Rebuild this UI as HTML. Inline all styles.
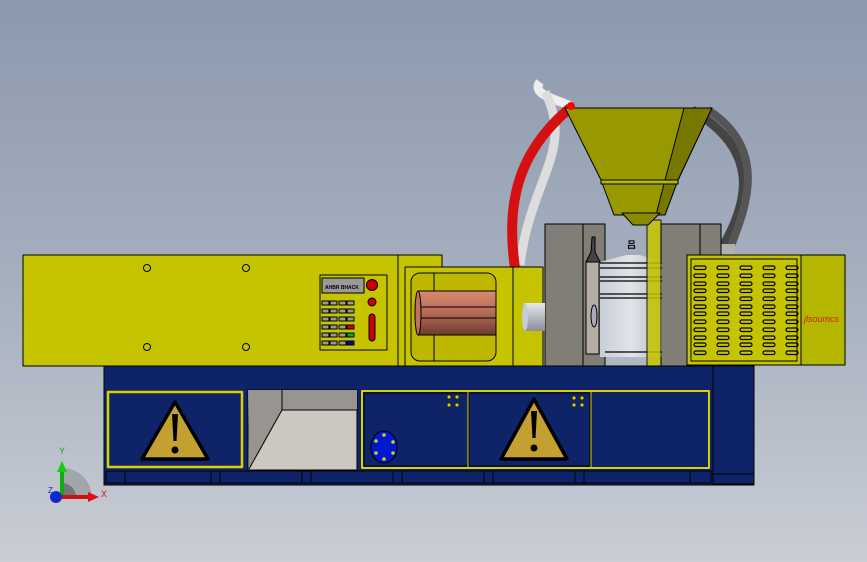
<!DOCTYPE html>
<html><head><meta charset="utf-8"><style>
html,body{margin:0;padding:0;width:867px;height:562px;overflow:hidden}
body{background:linear-gradient(#8c99ad,#a5afbe 50%,#c9cdd5);font-family:"Liberation Sans",sans-serif}
</style></head><body>
<svg width="867" height="562" viewBox="0 0 867 562" xmlns="http://www.w3.org/2000/svg" stroke-linejoin="round">
<defs>
<linearGradient id="cu" x1="0" y1="0" x2="0" y2="1"><stop offset="0" stop-color="#d98a70"/><stop offset="0.5" stop-color="#b56a55"/><stop offset="1" stop-color="#6e3a30"/></linearGradient>
<linearGradient id="noz" x1="0" y1="0" x2="0" y2="1"><stop offset="0" stop-color="#e6e8f0"/><stop offset="1" stop-color="#8a8d9a"/></linearGradient>
<linearGradient id="bot" x1="0" y1="0" x2="1" y2="0"><stop offset="0" stop-color="#c9cdd8"/><stop offset="0.5" stop-color="#e2e4ea"/><stop offset="1" stop-color="#b7bac4"/></linearGradient>
</defs>
<!-- hoses -->
<path d="M540 82 C530 95 560 100 570 106" fill="none" stroke="#eee" stroke-width="9"/>
<path d="M545 92 C575 150 530 180 520 265" fill="none" stroke="#ddd" stroke-width="9"/>
<path d="M570 108 C520 150 505 200 515 268" fill="none" stroke="#d51010" stroke-width="10"/>
<path d="M692 110 C760 150 750 200 722 248" fill="none" stroke="#444" stroke-width="9"/>
<path d="M708 110 C770 150 745 210 730 248" fill="none" stroke="#555" stroke-width="8"/>
<rect x="713" y="244" width="22" height="12" fill="#b0b0b0"/>
<!-- mold plates -->
<rect x="545" y="224" width="60" height="142" fill="#817d77" stroke="#000"/>
<line x1="583" y1="224" x2="583" y2="366" stroke="#000"/>
<rect x="661" y="224" width="60" height="142" fill="#817d77" stroke="#000"/>
<line x1="700" y1="224" x2="700" y2="366" stroke="#000"/>
<!-- bottle -->
<path d="M626 255 L640 255 L662 262 L662 357 L600 357 L600 262 Z" fill="url(#bot)"/>
<g stroke="#000" stroke-width="1.3"><line x1="600" y1="263" x2="662" y2="263"/><line x1="600" y1="268" x2="662" y2="268"/><line x1="600" y1="277" x2="662" y2="277"/><line x1="600" y1="281" x2="662" y2="281"/><line x1="600" y1="294" x2="662" y2="294"/><line x1="600" y1="298" x2="662" y2="298"/><line x1="605" y1="352" x2="662" y2="352"/></g>
<text x="627" y="248" font-size="9" font-weight="bold">吕</text>
<rect x="586" y="262" width="13" height="92" fill="#b5ada3" stroke="#000"/>
<path d="M592 237 L595 237 L595 252 L600 262 L586 262 L591 252Z" fill="#444" stroke="#000"/>
<ellipse cx="594" cy="316" rx="3" ry="11" fill="#aab" stroke="#000"/>
<rect x="647" y="220" width="14" height="146" fill="#c6c400" stroke="#000" opacity="0.85"/>
<!-- hopper -->
<path d="M565 108 L712 108 L678 180 L665 215 L614 215 L601 180 Z" fill="#989900" stroke="#000"/>
<path d="M684 108 L712 108 L678 180 L665 215 L656 215 L665 180Z" fill="#767800" stroke="#000"/>
<rect x="601" y="180" width="77" height="4" fill="#b5b800" stroke="#000"/>
<path d="M622 213 L660 213 L648 225 L633 225Z" fill="#8a8c00" stroke="#000"/>
<circle cx="571" cy="106" r="4" fill="#f00"/>
<!-- left yellow box -->
<rect x="23" y="255" width="419" height="111" fill="#c6c400" stroke="#000"/>
<line x1="398" y1="255" x2="398" y2="366" stroke="#000"/>
<g fill="none" stroke="#000"><circle cx="147" cy="268" r="3.5"/><circle cx="246" cy="268" r="3.5"/><circle cx="147" cy="347" r="3.5"/><circle cx="246" cy="347" r="3.5"/></g>
<!-- keypad -->
<rect x="320" y="275" width="67" height="75" fill="#c6c400" stroke="#000"/>
<rect x="322" y="278" width="42" height="15" fill="#9a9a9a" stroke="#000"/>
<text x="325" y="289" font-size="5" font-weight="bold">AHBR BHACK</text>
<circle cx="372" cy="285" r="5.5" fill="#c00" stroke="#000"/>
<circle cx="372" cy="302" r="4" fill="#c00" stroke="#000"/>
<rect x="369" y="314" width="6" height="27" rx="3" fill="#c00" stroke="#000"/>
<g fill="#999" stroke="#000" stroke-width="1">
<rect x="322" y="301" width="7" height="4"/><rect x="330" y="301" width="7" height="4"/><rect x="339" y="301" width="7" height="4"/><rect x="347" y="301" width="7" height="4"/>
<rect x="322" y="309" width="7" height="4"/><rect x="330" y="309" width="7" height="4"/><rect x="339" y="309" width="7" height="4"/><rect x="347" y="309" width="7" height="4"/>
<rect x="322" y="317" width="7" height="4"/><rect x="330" y="317" width="7" height="4"/><rect x="339" y="317" width="7" height="4"/><rect x="347" y="317" width="7" height="4"/>
<rect x="322" y="325" width="7" height="4"/><rect x="330" y="325" width="7" height="4"/><rect x="339" y="325" width="7" height="4"/><rect x="347" y="325" width="7" height="4" fill="#d00"/>
<rect x="322" y="333" width="7" height="4"/><rect x="330" y="333" width="7" height="4"/><rect x="339" y="333" width="7" height="4"/><rect x="347" y="333" width="7" height="4" fill="#0b0"/>
<rect x="322" y="341" width="7" height="4"/><rect x="330" y="341" width="7" height="4"/><rect x="339" y="341" width="7" height="4"/><rect x="347" y="341" width="7" height="4" fill="#00c"/>
</g>
<!-- barrel box -->
<rect x="405" y="267" width="138" height="99" fill="#c6c400" stroke="#000"/>
<line x1="513" y1="267" x2="513" y2="366" stroke="#000"/>
<rect x="411" y="273" width="85" height="88" rx="9" fill="#bdb700" stroke="#000"/>
<line x1="434" y1="273" x2="434" y2="361" stroke="#000"/>
<rect x="418" y="291" width="78" height="44" fill="url(#cu)" stroke="#000"/>
<line x1="418" y1="307" x2="496" y2="307" stroke="#000"/><line x1="418" y1="318" x2="496" y2="318" stroke="#000"/>
<ellipse cx="418" cy="313" rx="3" ry="22" fill="#c07060" stroke="#000"/>
<rect x="524" y="303" width="21" height="28" fill="url(#noz)"/>
<ellipse cx="525" cy="317" rx="3" ry="14" fill="#c8cad6"/>
<!-- right box -->
<rect x="687" y="255" width="158" height="110" fill="#b5b600" stroke="#000"/>
<rect x="687" y="255" width="114" height="110" fill="#c6c400" stroke="#000"/>
<rect x="691" y="259" width="106" height="102" fill="none" stroke="#000"/>
<g fill="none" stroke="#000" stroke-width="1.2">
<g id="col"><rect x="694" y="266" width="12" height="3.5" rx="1.7"/><rect x="694" y="274" width="12" height="3.5" rx="1.7"/><rect x="694" y="282" width="12" height="3.5" rx="1.7"/><rect x="694" y="289" width="12" height="3.5" rx="1.7"/><rect x="694" y="297" width="12" height="3.5" rx="1.7"/><rect x="694" y="305" width="12" height="3.5" rx="1.7"/><rect x="694" y="312" width="12" height="3.5" rx="1.7"/><rect x="694" y="320" width="12" height="3.5" rx="1.7"/><rect x="694" y="328" width="12" height="3.5" rx="1.7"/><rect x="694" y="336" width="12" height="3.5" rx="1.7"/><rect x="694" y="343" width="12" height="3.5" rx="1.7"/><rect x="694" y="351" width="12" height="3.5" rx="1.7"/></g>
<use href="#col" x="23"/><use href="#col" x="46"/><use href="#col" x="69"/><use href="#col" x="92"/>
</g>
<text x="804" y="322" font-size="9" fill="#c22" font-style="italic">jlsoumcs</text>
<!-- base -->
<rect x="104" y="366" width="610" height="119" fill="#0f2468" stroke="#000"/>
<rect x="713" y="366" width="41" height="119" fill="#0f2468" stroke="#000"/>
<rect x="713" y="474" width="41" height="10" fill="#0f2468" stroke="#000"/>
<rect x="108" y="392" width="134" height="75" fill="#0f2468" stroke="#d8d000" stroke-width="2.5"/>
<rect x="248" y="390" width="109" height="80" fill="#ccc8c1" stroke="#000"/>
<path d="M248 390 L357 390 L357 410 L282 410 L249 469Z" fill="#989590"/>
<path d="M282 410 L357 410 M282 390 L282 410 L249 469" fill="none" stroke="#000"/>
<rect x="362" y="391" width="347" height="77" fill="#0f2468" stroke="#d8d000" stroke-width="2"/>
<rect x="364" y="393" width="104" height="73" fill="none" stroke="#000"/>
<rect x="469" y="393" width="121" height="73" fill="none" stroke="#000"/>
<line x1="468" y1="392" x2="468" y2="467" stroke="#d8d000"/><line x1="591" y1="392" x2="591" y2="467" stroke="#d8d000"/>
<g fill="#d8d000" stroke="#000" stroke-width="0.5"><circle cx="449" cy="397" r="2"/><circle cx="457" cy="397" r="2"/><circle cx="449" cy="405" r="2"/><circle cx="457" cy="405" r="2"/><circle cx="574" cy="398" r="2"/><circle cx="582" cy="398" r="2"/><circle cx="574" cy="405" r="2"/><circle cx="582" cy="405" r="2"/></g>
<ellipse cx="384" cy="447" rx="13" ry="16" fill="#0018d0" stroke="#000"/>
<g fill="#d8d000"><circle cx="384" cy="435" r="1.8"/><circle cx="393" cy="442" r="1.8"/><circle cx="393" cy="453" r="1.8"/><circle cx="384" cy="459" r="1.8"/><circle cx="376" cy="453" r="1.8"/><circle cx="376" cy="441" r="1.8"/></g>
<g stroke="#000" stroke-width="3.5" fill="#c4a030">
<path d="M175 402 L208 459 L142 459Z"/><path d="M534 399 L567 459 L501 459Z"/></g>
<g fill="#000"><path d="M172 414 L178 414 L176.5 441 L173.5 441Z"/><circle cx="175" cy="450" r="3.5"/><path d="M531 411 L537 411 L535.5 438 L532.5 438Z"/><circle cx="534" cy="448" r="3.5"/></g>
<rect x="106" y="471" width="605" height="12" fill="#0f2468" stroke="#000"/>
<g stroke="#000" fill="none"><line x1="125" y1="471" x2="125" y2="483"/><line x1="211" y1="471" x2="211" y2="483"/><line x1="220" y1="471" x2="220" y2="483"/><line x1="302" y1="471" x2="302" y2="483"/><line x1="311" y1="471" x2="311" y2="483"/><line x1="393" y1="471" x2="393" y2="483"/><line x1="402" y1="471" x2="402" y2="483"/><line x1="484" y1="471" x2="484" y2="483"/><line x1="493" y1="471" x2="493" y2="483"/><line x1="575" y1="471" x2="575" y2="483"/><line x1="584" y1="471" x2="584" y2="483"/><line x1="690" y1="471" x2="690" y2="483"/></g>
<!-- triad -->
<path d="M62 497 L62 468 A30 30 0 0 1 92 497Z" fill="#777" opacity="0.4"/>
<path d="M62 497 L62 483 A14 14 0 0 1 76 497Z" fill="#555" opacity="0.6"/>
<line x1="62" y1="497" x2="62" y2="470" stroke="#1a1" stroke-width="4"/><path d="M57 472 L62 461 L67 472Z" fill="#1c1"/>
<line x1="62" y1="497" x2="90" y2="497" stroke="#c11" stroke-width="4"/><path d="M88 492 L99 497 L88 502Z" fill="#d11"/>
<circle cx="56" cy="497" r="6" fill="#1428c8"/>
<text x="59" y="454" font-size="9" fill="#1a1">Y</text><text x="101" y="497" font-size="9" fill="#c11">X</text><text x="48" y="493" font-size="8" fill="#1428c8">Z</text>
</svg>
</body></html>
